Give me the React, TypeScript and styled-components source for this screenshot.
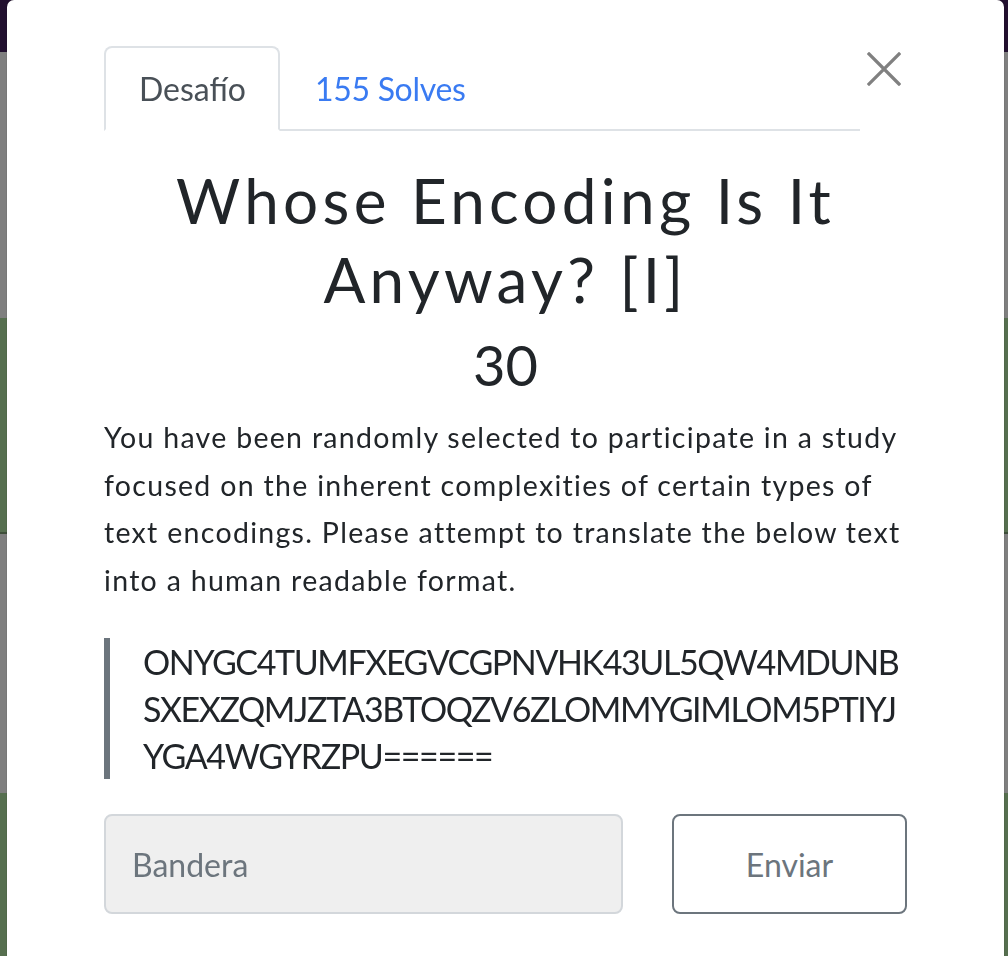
import styled, { createGlobalStyle } from "styled-components";

const GlobalStyle = createGlobalStyle`
  html, body {
    margin: 0;
    padding: 0;
    overflow: hidden;
  }
  body {
    font-family: "Lato", "Liberation Sans", sans-serif;
    color: #212529;
  }
`;

const Backdrop = styled.div`
  height: 956px;
  display: flex;
  flex-direction: column;
`;

const Band = styled.div<{ $h: number; $color: string; $edge?: boolean }>`
  height: ${(p) => p.$h}px;
  background: ${(p) => p.$color};
  border-bottom: ${(p) => (p.$edge ? "2px solid #3f4f3a" : "none")};
  flex-shrink: 0;
`;

const Modal = styled.div`
  position: fixed;
  top: 0;
  left: 7px;
  width: 997px;
  height: 1000px;
  box-sizing: border-box;
  background: #fff;
  border-radius: 7px 7px 0 0;
  box-shadow: 0 0 1px rgba(0, 0, 0, 0.5);
  padding: 46px 97px 0;
`;

const Header = styled.div`
  display: flex;
  align-items: flex-start;
`;

const Tabs = styled.nav`
  flex: 1;
  display: flex;
  border-bottom: 2px solid #dee2e6;
`;

const Tab = styled.a<{ $active?: boolean }>`
  display: block;
  height: 81px;
  line-height: 81px;
  padding: 0 32px 0 33px;
  margin-bottom: -2px;
  font-size: 32px;
  text-decoration: none;
  border: 2px solid ${(p) => (p.$active ? "#dee2e6" : "transparent")};
  border-bottom-color: ${(p) => (p.$active ? "#fff" : "transparent")};
  border-radius: 8px 8px 0 0;
  color: ${(p) => (p.$active ? "#495057" : "#3a7bf2")};
  letter-spacing: ${(p) => (p.$active ? "0" : "-0.3px")};
  background: ${(p) => (p.$active ? "#fff" : "transparent")};
`;

const Close = styled.button`
  width: 47px;
  height: 47px;
  margin-top: 6px;
  padding: 0;
  border: none;
  background: none;
  display: flex;
  justify-content: center;
  cursor: pointer;
`;

const Title = styled.h2`
  margin: 30px 0 0;
  font-size: 62px;
  line-height: 79px;
  font-weight: 400;
  letter-spacing: 4.3px;
  text-align: center;
`;

const Points = styled.h3`
  margin: 12px 0 0;
  font-size: 56px;
  line-height: 67px;
  font-weight: 400;
  text-align: center;
`;

const Description = styled.p`
  margin: 16px 0 0;
  font-size: 28.5px;
  line-height: 47.6px;
  letter-spacing: 1.3px;
`;

const Quote = styled.blockquote`
  margin: 34px 0 0;
  padding-left: 33px;
  border-left: 6px solid #6c757d;
  font-size: 34px;
  line-height: 47px;
  letter-spacing: -1.4px;
  word-break: break-all;
`;

const SubmitRow = styled.form`
  margin-top: 35px;
  display: flex;
  justify-content: space-between;
`;

const FlagInput = styled.input`
  width: 519px;
  height: 100px;
  box-sizing: border-box;
  padding: 0 26px;
  background: #efefef;
  border: 2px solid #d3d7db;
  border-radius: 8px;
  font-family: "Lato", sans-serif;
  font-size: 32px;
  color: #495057;
  outline: none;

  &::placeholder {
    color: #6c757d;
  }
`;

const SubmitButton = styled.button`
  width: 235px;
  height: 100px;
  box-sizing: border-box;
  background: #fff;
  border: 2px solid #6c757d;
  border-radius: 8px;
  font-family: "Lato", sans-serif;
  font-size: 32px;
  color: #6c757d;
  cursor: pointer;
`;

export default function App() {
  return (
    <>
      <GlobalStyle />
      <Backdrop>
        <Band $h={52} $color="#22102f" />
        <Band $h={266} $color="#7f7f7f" />
        <Band $h={214} $color="#566f4f" $edge />
        <Band $h={259} $color="#7f7f7f" />
        <Band $h={163} $color="#566f4f" />
      </Backdrop>
      <Modal>
        <Header>
          <Tabs>
            <Tab $active>Desafío</Tab>
            <Tab>155 Solves</Tab>
          </Tabs>
          <Close aria-label="Close">
            <svg width="34" height="34" viewBox="0 0 34 34">
              <path
                d="M2 2 L32 32 M32 2 L2 32"
                stroke="#808080"
                strokeWidth="3.2"
                strokeLinecap="square"
              />
            </svg>
          </Close>
        </Header>
        <Title>Whose Encoding Is It Anyway? [I]</Title>
        <Points>30</Points>
        <Description>
          You have been randomly selected to participate in a study focused on
          the inherent complexities of certain types of text encodings. Please
          attempt to translate the below text into a human readable format.
        </Description>
        <Quote>
          ONYGC4TUMFXEGVCGPNVHK43UL5QW4MDUNBSXEXZQMJZTA3BTOQZV6ZLOMMYGIMLOM5PTIYJYGA4WGYRZPU======
        </Quote>
        <SubmitRow onSubmit={(e) => e.preventDefault()}>
          <FlagInput placeholder="Bandera" />
          <SubmitButton type="submit">Enviar</SubmitButton>
        </SubmitRow>
      </Modal>
    </>
  );
}
